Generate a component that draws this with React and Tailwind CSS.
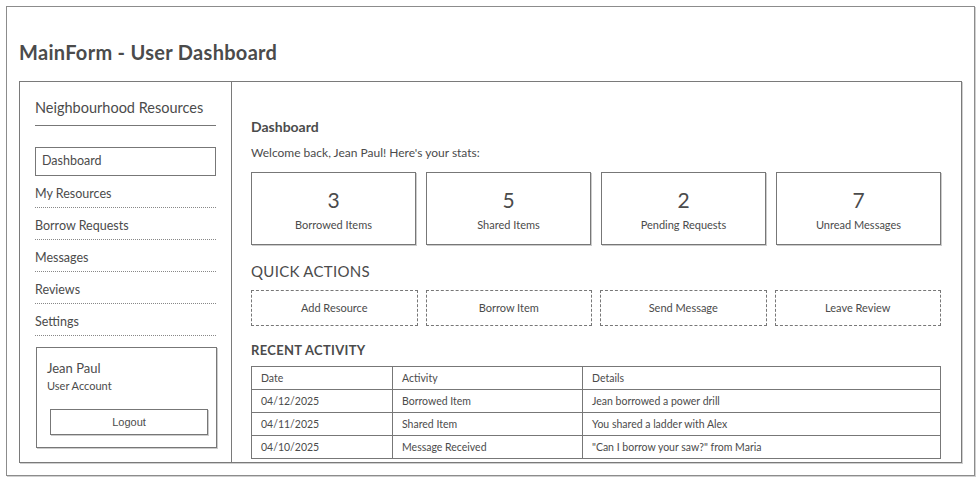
import React from "react";

const navItems = ["My Resources", "Borrow Requests", "Messages", "Reviews", "Settings"];

const stats = [
  { value: "3", label: "Borrowed Items" },
  { value: "5", label: "Shared Items" },
  { value: "2", label: "Pending Requests" },
  { value: "7", label: "Unread Messages" },
];

const actions = ["Add Resource", "Borrow Item", "Send Message", "Leave Review"];

const activity = [
  { date: "04/12/2025", activity: "Borrowed Item", details: "Jean borrowed a power drill" },
  { date: "04/11/2025", activity: "Shared Item", details: "You shared a ladder with Alex" },
  { date: "04/10/2025", activity: "Message Received", details: '"Can I borrow your saw?" from Maria' },
];

const App = () => {
  return (
    <div className="w-[979px] h-[480px] bg-white pt-[6px] pl-[6px] text-[#4b4b4b] font-['Lato',sans-serif]">
      <div className="w-[969px] h-[470px] border border-[#8c8c8c] shadow-[1px_1px_0_#d0d0d0] pl-[12px] pt-[33px]">
        <h1 className="text-[20px] font-bold leading-6 tracking-[0.3px] h-[41px] whitespace-nowrap">MainForm - User Dashboard</h1>

        <div className="w-[943px] h-[382px] border border-[#7a7a7a] shadow-[1px_1px_0_#cfcfcf] flex">
          {/* sidebar */}
          <aside className="w-[212px] border-r border-[#7a7a7a] shrink-0 pl-[15px] pt-[16px]">
            <div className="w-[181px] border-b border-[#777] pb-[7px] text-[14.5px] leading-5 whitespace-nowrap">
              Neighbourhood Resources
            </div>
            <div className="mt-[21px] w-[181px] h-[29px] border border-[#777] pl-[6px] flex items-center text-[12.5px]">
              Dashboard
            </div>
            {navItems.map((item) => (
              <div
                key={item}
                className="w-[181px] pt-[8px] pb-[3px] leading-5 text-[12.5px] border-b border-dotted border-[#888]"
              >
                {item}
              </div>
            ))}
            <div className="mt-[11px] ml-[1px] w-[181px] h-[101px] border border-[#777] shadow-[1px_1px_0_#ccc] pt-[10px] pl-[10px]">
              <div className="text-[13px] leading-5">Jean Paul</div>
              <div className="text-[11px] leading-4">User Account</div>
              <div className="mt-[15px] ml-[3px] w-[158px] h-[26px] border border-[#777] shadow-[1px_1px_0_#ccc] flex items-center justify-center text-[11px] font-['Liberation_Sans',sans-serif]">
                Logout
              </div>
            </div>
          </aside>

          {/* main */}
          <main className="flex-1 pl-[19px] pr-[20px] pt-[35px]">
            <h2 className="text-[14px] font-bold leading-5">Dashboard</h2>
            <p className="mt-[8px] text-[12px] leading-4">Welcome back, Jean Paul! Here's your stats:</p>

            <div className="mt-[11px] grid grid-cols-4 gap-[10px]">
              {stats.map((s) => (
                <div
                  key={s.label}
                  className="h-[73px] border border-[#777] shadow-[1px_1px_0_#ccc] flex flex-col items-center pt-[13px]"
                >
                  <div className="text-[21px] leading-7">{s.value}</div>
                  <div className="mt-[3px] text-[11px] leading-4">{s.label}</div>
                </div>
              ))}
            </div>

            <h3 className="mt-[16px] text-[15px] leading-5 tracking-[0.3px]">QUICK ACTIONS</h3>

            <div className="mt-[9px] grid grid-cols-4 gap-[8px]">
              {actions.map((a) => (
                <div
                  key={a}
                  className="h-[36px] border border-dashed border-[#777] flex items-center justify-center text-[11px]"
                >
                  {a}
                </div>
              ))}
            </div>

            <h3 className="mt-[16px] text-[13px] font-bold leading-4 tracking-[0.3px]">RECENT ACTIVITY</h3>

            <table className="mt-[8px] w-[690px] border-collapse text-[10.5px] leading-4">
              <thead>
                <tr className="h-[23px]">
                  <th className="w-[141px] border border-[#777] text-left font-normal pl-[9px]">Date</th>
                  <th className="w-[190px] border border-[#777] text-left font-normal pl-[9px]">Activity</th>
                  <th className="border border-[#777] text-left font-normal pl-[9px]">Details</th>
                </tr>
              </thead>
              <tbody>
                {activity.map((r) => (
                  <tr key={r.date} className="h-[23px]">
                    <td className="border border-[#777] pl-[9px]">{r.date}</td>
                    <td className="border border-[#777] pl-[9px]">{r.activity}</td>
                    <td className="border border-[#777] pl-[9px]">{r.details}</td>
                  </tr>
                ))}
              </tbody>
            </table>
          </main>
        </div>
      </div>
    </div>
  );
};

export default App;
